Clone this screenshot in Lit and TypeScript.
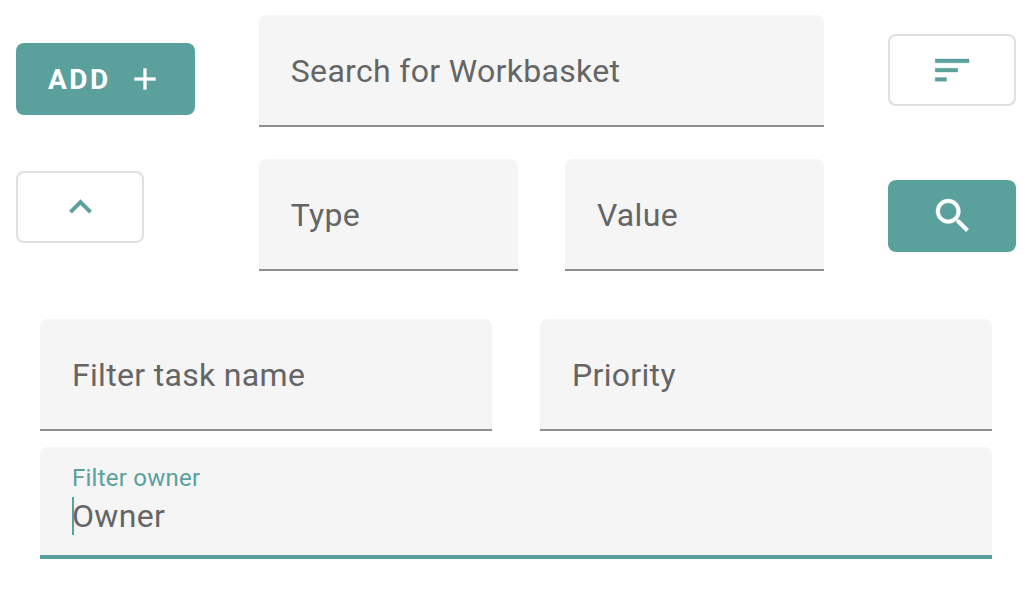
import { LitElement, html, css, nothing } from "lit";
import { customElement, property } from "lit/decorators.js";

@customElement("filter-field")
export class FilterField extends LitElement {
  @property() label = "";
  @property() hint = "";
  @property({ type: Boolean, reflect: true }) active = false;

  static styles = css`
    :host {
      display: block;
      flex: 1;
      min-width: 0;
      color: #656565;
      font: 400 32px/38px Roboto, sans-serif;
    }
    .field {
      display: grid;
      grid-template-columns: minmax(0, 1fr);
      align-items: center;
      box-sizing: border-box;
      height: 112px;
      border-bottom: 2px solid #8e8e8e;
      border-radius: 8px 8px 0 0;
      background: #f5f5f5;
    }
    .label,
    .input,
    .caret {
      grid-area: 1 / 1;
    }
    .label {
      padding: 2px 32px 0;
      letter-spacing: 0.01em;
      pointer-events: none;
      z-index: 1;
    }
    .input {
      box-sizing: border-box;
      width: 100%;
      height: 100%;
      margin: 0;
      padding: 0 32px;
      border: 0;
      outline: 0;
      background: none;
      color: inherit;
      font: inherit;
      letter-spacing: 0.01em;
      caret-color: #5aa19e;
    }
    .input::placeholder {
      color: inherit;
      opacity: 1;
    }
    .field.active {
      border-bottom: 4px solid #5aa19e;
    }
    .active .label {
      align-self: start;
      padding-top: 16px;
      color: #5aa19e;
      font-size: 24px;
      line-height: 30px;
    }
    .active .input {
      padding-top: 30px;
    }
    .caret {
      align-self: end;
      width: 2px;
      height: 38px;
      margin: 0 32px 20px;
      background: #5aa19e;
    }
  `;

  render() {
    return html`
      <div class="field ${this.active ? "active" : ""}">
        <label class="label" for="input">${this.label}</label>
        <input class="input" id="input" type="text" placeholder=${this.hint} />
        ${this.active ? html`<span class="caret"></span>` : nothing}
      </div>
    `;
  }
}

@customElement("app-root")
export class AppRoot extends LitElement {
  static styles = css`
    :host {
      display: block;
      padding: 15px 16px 32px;
      background: #fff;
      font-family: Roboto, sans-serif;
    }
    .toolbar {
      display: flex;
      align-items: center;
      gap: 64px;
    }
    .side {
      display: flex;
      flex-direction: column;
      align-items: flex-start;
      gap: 56px;
    }
    .actions {
      gap: 74px;
    }
    .fields {
      display: flex;
      flex: 1;
      flex-direction: column;
      gap: 32px;
      min-width: 0;
    }
    .row {
      display: flex;
      gap: 47px;
    }
    .filters {
      display: flex;
      flex-direction: column;
      gap: 16px;
      padding: 48px 24px 0;
    }
    .filters .row {
      gap: 48px;
    }
    .button {
      display: flex;
      align-items: center;
      justify-content: center;
      box-sizing: border-box;
      min-width: 128px;
      height: 72px;
      margin: 0;
      padding: 0 32px;
      border: 0;
      border-radius: 8px;
      background: #5aa19e;
      color: #fff;
      font: 700 28px/36px Roboto, sans-serif;
      letter-spacing: 0.09em;
      cursor: pointer;
    }
    .add {
      gap: 16px;
    }
    .text {
      padding-top: 2px;
    }
    .outlined {
      border: 2px solid #e0e0e0;
      background: #fff;
      color: #5aa19e;
    }
    .icon {
      flex: none;
      width: 45px;
      height: 45px;
      fill: currentColor;
      stroke: currentColor;
      stroke-width: 0.2;
    }
    .small {
      width: 36px;
      height: 36px;
    }
  `;

  render() {
    return html`
      <div class="toolbar">
        <div class="side">
          <button class="button add" type="button">
            <span class="text">ADD</span>
            <svg class="icon small" viewBox="0 0 24 24" aria-hidden="true">
              <path d="M19 13h-6v6h-2v-6H5v-2h6V5h2v6h6z" />
            </svg>
          </button>
          <button class="button outlined" type="button" aria-label="Collapse filters">
            <svg class="icon" viewBox="0 0 24 24" aria-hidden="true">
              <path d="M12 7.7l-6 6 1.41 1.41L12 10.53l4.59 4.58L18 13.7z" />
            </svg>
          </button>
        </div>
        <div class="fields">
          <filter-field label="Search for Workbasket"></filter-field>
          <div class="row">
            <filter-field label="Type"></filter-field>
            <filter-field label="Value"></filter-field>
          </div>
        </div>
        <div class="side actions">
          <button class="button outlined" type="button" aria-label="Sort">
            <svg class="icon" viewBox="0 0 24 24" aria-hidden="true">
              <path d="M2.8 17.7h6v-2h-6v2zM2.8 5.9v2h18v-2h-18zm0 6.9h12v-2h-12v2z" />
            </svg>
          </button>
          <button class="button" type="button" aria-label="Search">
            <svg class="icon" viewBox="-.2 .3 24 24" aria-hidden="true">
              <path
                d="M15.5 14h-.79l-.28-.27C15.41 12.59 16 11.11 16 9.5 16 5.91 13.09 3 9.5 3S3 5.91 3 9.5 5.91 16 9.5 16c1.61 0 3.09-.59 4.23-1.57l.27.28v.79l5 4.99L20.49 19l-4.99-5zm-6 0C7.01 14 5 11.99 5 9.5S7.01 5 9.5 5 14 7.01 14 9.5 11.99 14 9.5 14z"
              />
            </svg>
          </button>
        </div>
      </div>
      <div class="filters">
        <div class="row">
          <filter-field label="Filter task name"></filter-field>
          <filter-field label="Priority"></filter-field>
        </div>
        <filter-field label="Filter owner" hint="Owner" active></filter-field>
      </div>
    `;
  }
}
